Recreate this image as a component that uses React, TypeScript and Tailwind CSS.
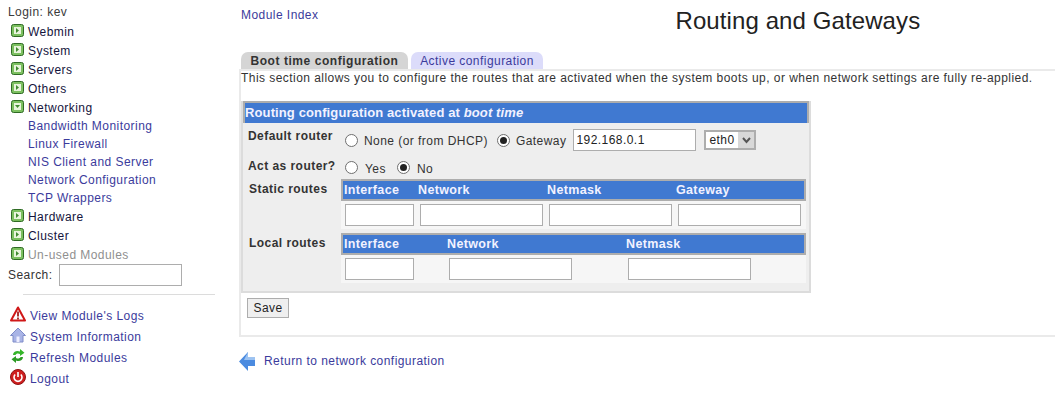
const link = 'text-[#3b3b9c]';

function PlusIcon({ open }: { open?: boolean }) {
  return (
    <svg width="13" height="13" viewBox="0 0 13 13" className="shrink-0">
      <rect x="0.5" y="0.5" width="12" height="12" rx="2" fill="#7cc060" stroke="#2f6b24" />
      <rect x="3" y="3" width="7" height="7" fill="#e8f4dc" />
      {open ? <path d="M4 5h5l-2.5 3z" fill="#3f8a2f" /> : <path d="M5 4v5l3-2.5z" fill="#3f8a2f" />}
    </svg>
  );
}

function Category({ name, open, dim }: { name: string; open?: boolean; dim?: boolean }) {
  return (
    <div className="flex h-[19px] items-start pl-[11px]">
      <div className="mt-[3px]">
        <PlusIcon open={open} />
      </div>
      <span className={`ml-[4px] mt-[4px] leading-[15px] ${dim ? 'text-[#8f8f8f]' : 'text-[#14143c]'}`}>{name}</span>
    </div>
  );
}

function WarnIcon() {
  return (
    <svg width="16" height="16" viewBox="0 0 16 16">
      <path d="M8 1.5L15 14.5H1z" fill="#fff" stroke="#d01818" strokeWidth="2" strokeLinejoin="round" />
      <rect x="7" y="5.5" width="2" height="5" fill="#a33" />
      <rect x="7" y="11.5" width="2" height="2" fill="#a33" />
    </svg>
  );
}

function HomeIcon() {
  return (
    <svg width="16" height="16" viewBox="0 0 16 16">
      <path d="M8 1L0.5 8.5H3V15H13V8.5H15.5z" fill="#a9b4e6" stroke="#7f8cc8" />
      <rect x="6.5" y="9.5" width="3" height="5.5" fill="#eef" />
    </svg>
  );
}

function RefreshIcon() {
  return (
    <svg width="16" height="16" viewBox="0 0 16 16">
      <path d="M3 7C3 3.5 7 2 10 3.5V1l4.5 3.8L10 8V6C8 5 6 5.5 5.5 7z" fill="#35b52a" />
      <path d="M13 9C13 12.5 9 14 6 12.5V15L1.5 11.2 6 8v2c2 1 4 .5 4.5-1z" fill="#2c9a24" />
    </svg>
  );
}

function PowerIcon() {
  return (
    <svg width="16" height="16" viewBox="0 0 16 16">
      <circle cx="8" cy="8" r="7.5" fill="#cf1f1f" stroke="#8f1212" />
      <path d="M5.2 5.5a4 4 0 1 0 5.6 0" fill="none" stroke="#fff" strokeWidth="1.6" />
      <rect x="7.2" y="3" width="1.6" height="5" fill="#fff" />
    </svg>
  );
}

function Radio({ checked, className }: { checked?: boolean; className?: string }) {
  return (
    <span className={`flex h-[13px] w-[13px] shrink-0 items-center justify-center rounded-full border border-[#6f6f6f] bg-white ${className ?? ''}`}>
      {checked && <span className="h-[7px] w-[7px] rounded-full bg-[#222]" />}
    </span>
  );
}

function TextBox({ width, value }: { width: string; value?: string }) {
  return (
    <input
      readOnly
      value={value ?? ''}
      className={`${width} h-[22px] border border-[#adadad] bg-white px-[2px] text-[12px] text-[#222] outline-none`}
    />
  );
}

function RouteTable({ heads, inputs, pad }: { heads: [string, string][]; inputs: string[]; pad: string }) {
  return (
    <div className="w-[465px] bg-[#f6f6f6]">
      <div className="flex h-[22px] items-center border-2 border-[#adadad] bg-[#4079d1] text-[12.5px] font-bold tracking-[0.35px] text-[#f2f2ff]">
        {heads.map(([h, w]) => (
          <span key={h} className={`${w} pl-[1px]`}>
            {h}
          </span>
        ))}
      </div>
      <div className={`flex pt-[3px] pb-[3px] ${pad}`}>
        {inputs.map((w, i) => (
          <TextBox key={i} width={w} />
        ))}
      </div>
    </div>
  );
}

export default function App() {
  return (
    <div className="flex h-[408px] w-[1055px] overflow-hidden bg-white font-['Liberation_Sans',Arial,sans-serif] text-[12px] tracking-[0.45px] text-[#333]">
      <aside className="w-[239px] shrink-0 pt-[5px]">
        <div className="pl-[8px] leading-[15px] text-[#3a3a3a]">Login: kev</div>
        <div className="mt-[1px]">
          <Category name="Webmin" />
          <Category name="System" />
          <Category name="Servers" />
          <Category name="Others" />
          <Category name="Networking" open />
          <div className={`pl-[28px] ${link}`}>
            {['Bandwidth Monitoring', 'Linux Firewall', 'NIS Client and Server', 'Network Configuration', 'TCP Wrappers'].map((s) => (
              <div key={s} className="flex h-[18px] items-center pt-[1px]">
                {s}
              </div>
            ))}
          </div>
          <Category name="Hardware" />
          <Category name="Cluster" />
          <Category name="Un-used Modules" dim />
        </div>
        <div className="flex items-center pl-[8px] pt-[1px]">
          <span>Search:</span>
          <input readOnly className="ml-[6px] h-[22px] w-[123px] border border-[#adadad] bg-white outline-none" />
        </div>
        <div className="ml-[23px] mt-[8px] h-px w-[192px] bg-[#dcdcdc]" />
        <div className={`mt-[12px] pl-[10px] ${link}`}>
          {[
            [<WarnIcon key="a" />, "View Module's Logs"],
            [<HomeIcon key="b" />, 'System Information'],
            [<RefreshIcon key="c" />, 'Refresh Modules'],
            [<PowerIcon key="d" />, 'Logout'],
          ].map(([icon, text], i) => (
            <div key={i} className="flex h-[21px] items-start">
              <span className="mt-[-1px]">{icon}</span>
              <span className="ml-[4px] mt-[2px] leading-[15px]">{text}</span>
            </div>
          ))}
        </div>
      </aside>

      <main className="min-w-0 flex-1">
        <div className="flex h-[52px] items-start">
          <a className={`ml-[2px] mt-[8px] leading-[15px] ${link}`}>Module Index</a>
          <h1 className="ml-[357px] mt-[8px] text-[24px] leading-[26px] tracking-[0.1px] text-[#222]">Routing and Gateways</h1>
        </div>
        <div className="ml-[2px] flex h-[17px] gap-[3px]">
          <div className="flex w-[167px] items-center justify-center rounded-t-[7px] bg-[#d5d5d5] font-bold tracking-[0.55px] text-[#333]">Boot time configuration</div>
          <div className={`flex w-[132px] items-center justify-center rounded-t-[7px] bg-[#dcdcfa] ${link}`}>Active configuration</div>
        </div>
        <div className="h-[268px] border-2 border-r-0 border-[#eaeaea]">
          <p className="leading-[15px]">This section allows you to configure the routes that are activated when the system boots up, or when network settings are fully re-applied.</p>
          <div className="mt-[15px] h-[192px] w-[570px] border-2 border-t-0 border-[#dcdcdc] bg-[#eeeeee]">
            <div className="flex h-[22px] items-center border-2 border-b-0 border-[#adadad] bg-[#4079d1] text-[13px] font-bold tracking-[0.12px] text-[#f2f2ff]">
              Routing configuration activated at&nbsp;<i>boot time</i>
            </div>
            <div className="flex h-[30px] items-center pt-[4px]">
              <span className="-mt-[8px] w-[102px] pl-[5px] font-bold text-[#333]">Default router</span>
              <Radio />
              <span className="ml-[6px] mt-[2px]">None (or from DHCP)</span>
              <Radio checked className="ml-[9px]" />
              <span className="ml-[6px] mt-[2px]">Gateway</span>
              <span className="ml-[7px] flex">
                <TextBox width="w-[123px]" value="192.168.0.1" />
              </span>
              <span className="ml-[8px] flex h-[20px] w-[52px] items-center border-2 border-[#adadad] bg-white text-[#222]">
                <span className="flex-1 pl-[3px]">eth0</span>
                <span className="flex h-full w-[16px] items-center justify-center bg-[#d8d8d8]">
                  <svg width="9" height="7" viewBox="0 0 9 7">
                    <path d="M1 1l3.5 4L8 1" fill="none" stroke="#555" strokeWidth="2" />
                  </svg>
                </span>
              </span>
            </div>
            <div className="flex h-[24px] items-center pt-[2px]">
              <span className="w-[102px] pl-[5px] font-bold text-[#333]">Act as router?</span>
              <Radio className="mt-[2px]" />
              <span className="ml-[7px] mt-[6px]">Yes</span>
              <Radio checked className="ml-[11px] mt-[2px]" />
              <span className="ml-[7px] mt-[6px]">No</span>
            </div>
            <div className="mt-[2px] flex">
              <span className="w-[98px] pt-[3px] pl-[6px] font-bold leading-[15px]">Static routes</span>
              <RouteTable
                pad="pl-[4px] gap-[6px]"
                heads={[
                  ['Interface', 'w-[74px]'],
                  ['Network', 'w-[129px]'],
                  ['Netmask', 'w-[129px]'],
                  ['Gateway', 'w-[129px]'],
                ]}
                inputs={['w-[69px]', 'w-[123px]', 'w-[123px]', 'w-[123px]']}
              />
            </div>
            <div className="mt-[4px] flex">
              <span className="w-[98px] pt-[3px] pl-[6px] font-bold leading-[15px]">Local routes</span>
              <RouteTable
                pad="pl-[4px] gap-[35px] [&>*:nth-child(2)]:mr-[21px]"
                heads={[
                  ['Interface', 'w-[103px]'],
                  ['Network', 'w-[179px]'],
                  ['Netmask', 'w-[179px]'],
                ]}
                inputs={['w-[69px]', 'w-[123px]', 'w-[123px]']}
              />
            </div>
          </div>
          <button className="ml-[6px] mt-[5px] h-[20px] w-[42px] border border-[#adadad] bg-[#efefef] text-[12px] text-[#222]">Save</button>
        </div>
        <div className="mt-[14px] flex h-[20px] items-center">
          <svg width="17" height="19" viewBox="0 0 17 19">
            <path d="M0 9.5L9 0V5.5H16V14H9V19z" fill="#4b8be0" />
            <path d="M9 0V5.5H16V8H5z" fill="#9cc3f2" />
          </svg>
          <a className={`ml-[8px] ${link}`}>Return to network configuration</a>
        </div>
      </main>
    </div>
  );
}
